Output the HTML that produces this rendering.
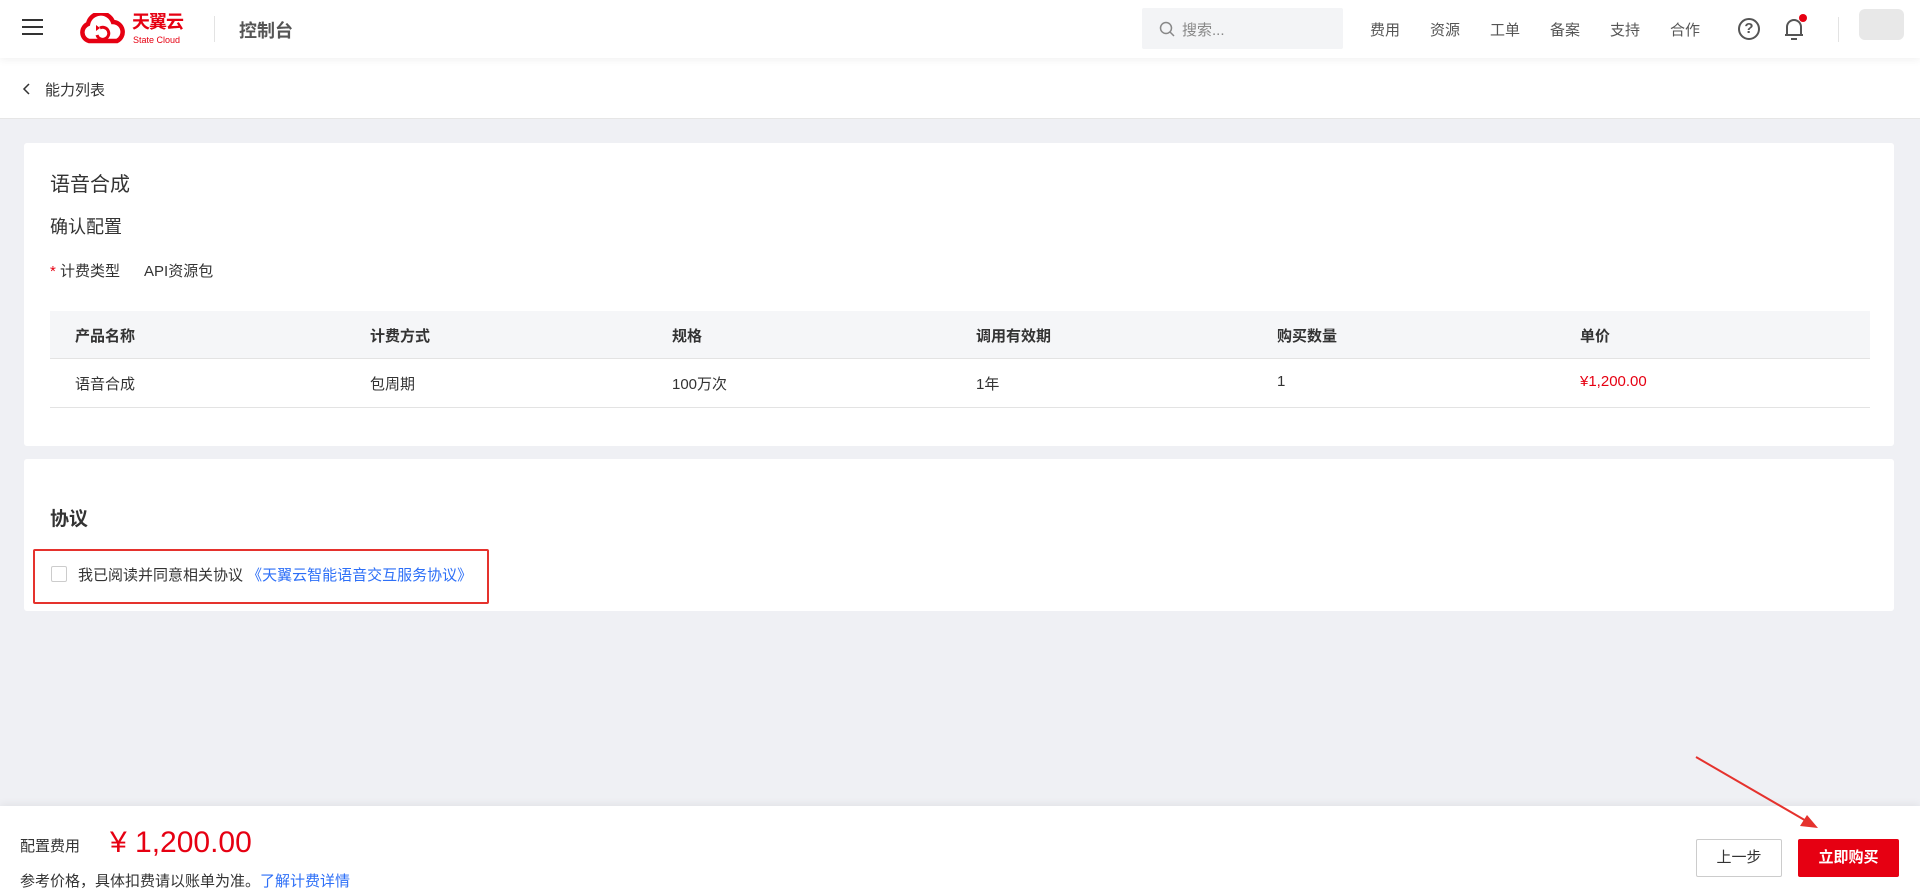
<!DOCTYPE html>
<html><head><meta charset="utf-8"><style>
*{margin:0;padding:0;box-sizing:border-box}
body{width:1920px;height:894px;overflow:hidden;background:#eff0f4;font-family:"Liberation Sans","Noto Sans CJK SC",sans-serif;color:#333;position:relative}
.abs{position:absolute}
.hdr{left:0;top:0;width:1920px;height:58px;background:#fff;box-shadow:0 2px 8px rgba(0,0,0,.06);z-index:2}
.bc{left:0;top:58px;width:1920px;height:61px;background:#fff;border-bottom:1px solid #e6e6e6}
.card{background:#fff;border-radius:3px}
.nav{top:19px;font-size:15px;color:#555}
.th{top:325px;font-size:15px;color:#333;font-weight:bold}
.td{top:373px;font-size:15px;color:#333}
</style></head><body>
<div class="abs hdr">
  <div class="abs" style="left:22px;top:19px;width:21px;height:2px;background:#333;box-shadow:0 7px 0 #333,0 14px 0 #333"></div>
  <svg class="abs" style="left:77px;top:13px" width="50" height="32" viewBox="0 0 50 32"><path d="M12 28 A9 9 0 0 1 11 11 A13 13 0 0 1 36 9 A10 10 0 0 1 40 28 Z" fill="none" stroke="#e60012" stroke-width="4.5"/><path d="M20 22 a6 6 0 1 0 3-7" fill="none" stroke="#e60012" stroke-width="3"/><path d="M19 12 l4 3 -4 3z" fill="#e60012"/></svg>
  <div class="abs" style="left:132px;top:12px;font-size:18px;line-height:20px;font-weight:bold;color:#e60012;letter-spacing:-1px">天翼云</div>
  <div class="abs" style="left:133px;top:35px;font-size:9px;line-height:10px;color:#e60012">State Cloud</div>
  <div class="abs" style="left:214px;top:16px;width:1px;height:26px;background:#e3e3e3"></div>
  <div class="abs" style="left:239px;top:17px;font-size:18px;font-weight:bold;color:#555">控制台</div>
  <div class="abs" style="left:1142px;top:8px;width:201px;height:41px;background:#f3f4f6;border-radius:2px"></div>
  <svg class="abs" style="left:1159px;top:21px" width="16" height="16"><circle cx="7" cy="7" r="5.5" fill="none" stroke="#888" stroke-width="1.5"/><path d="M11 11l4 4" stroke="#888" stroke-width="1.5"/></svg>
  <div class="abs" style="left:1182px;top:19px;font-size:15px;color:#888">搜索...</div>
  <div class="abs nav" style="left:1370px">费用</div>
  <div class="abs nav" style="left:1430px">资源</div>
  <div class="abs nav" style="left:1490px">工单</div>
  <div class="abs nav" style="left:1550px">备案</div>
  <div class="abs nav" style="left:1610px">支持</div>
  <div class="abs nav" style="left:1670px">合作</div>
  <div class="abs" style="left:1738px;top:18px;width:22px;height:22px;border:2px solid #555;border-radius:50%;font-size:15px;font-weight:bold;color:#555;text-align:center;line-height:18px">?</div>
  <svg class="abs" style="left:1782px;top:16px" width="24" height="26"><path d="M5 19 V11 a7 7 0 0 1 14 0 V19 Z M3 19 H21 M9 23 H15" fill="none" stroke="#555" stroke-width="2"/></svg>
  <div class="abs" style="left:1799px;top:14px;width:8px;height:8px;background:#e60012;border-radius:50%"></div>
  <div class="abs" style="left:1838px;top:17px;width:1px;height:25px;background:#e3e3e3"></div>
  <div class="abs" style="left:1859px;top:9px;width:45px;height:31px;background:#e8e8e8;border-radius:6px"></div>
</div>
<div class="abs bc">
  <svg class="abs" style="left:22px;top:25px" width="10" height="12"><path d="M7 1 L2 6 L7 11" fill="none" stroke="#333" stroke-width="1.5"/></svg>
  <div class="abs" style="left:45px;top:21px;font-size:15px;color:#333">能力列表</div>
</div>
<div class="abs card" style="left:24px;top:143px;width:1870px;height:303px"></div>
<div class="abs" style="left:50px;top:168px;font-size:20px;color:#333">语音合成</div>
<div class="abs" style="left:50px;top:213px;font-size:18px;color:#333">确认配置</div>
<div class="abs" style="left:50px;top:260px;font-size:15px"><span style="color:#e60012">*</span> 计费类型<span style="margin-left:24px">API资源包</span></div>
<div class="abs" style="left:50px;top:311px;width:1820px;height:48px;background:#f5f6f8;border-bottom:1px solid #e3e3e3"></div>
<div class="abs" style="left:50px;top:407px;width:1820px;height:1px;background:#e3e3e3"></div>
<div class="abs th" style="left:75px">产品名称</div><div class="abs th" style="left:370px">计费方式</div><div class="abs th" style="left:672px">规格</div><div class="abs th" style="left:976px">调用有效期</div><div class="abs th" style="left:1277px">购买数量</div><div class="abs th" style="left:1580px">单价</div>
<div class="abs td" style="left:75px">语音合成</div><div class="abs td" style="left:370px">包周期</div><div class="abs td" style="left:672px">100万次</div><div class="abs td" style="left:976px">1年</div><div class="abs td" style="left:1277px">1</div><div class="abs td" style="left:1580px;color:#e60012">¥1,200.00</div>
<div class="abs card" style="left:24px;top:459px;width:1870px;height:152px"></div>
<div class="abs" style="left:50px;top:504px;font-size:19px;font-weight:bold;color:#333">协议</div>
<div class="abs" style="left:33px;top:549px;width:456px;height:55px;border:2px solid #e5322d;border-radius:2px"></div>
<div class="abs" style="left:51px;top:566px;width:16px;height:16px;border:1px solid #ccc;border-radius:2px;background:#fff"></div>
<div class="abs" style="left:78px;top:564px;font-size:15px;color:#333">我已阅读并同意相关协议 <span style="color:#2d6ff7">《天翼云智能语音交互服务协议》</span></div>
<div class="abs" style="left:0;top:806px;width:1920px;height:88px;background:#fff;box-shadow:0 -2px 8px rgba(0,0,0,.06)"></div>
<div class="abs" style="left:20px;top:835px;font-size:15px;color:#333">配置费用</div>
<div class="abs" style="left:110px;top:826px;font-size:30px;color:#e60012">¥ 1,200.00</div>
<div class="abs" style="left:20px;top:870px;font-size:15px;color:#333">参考价格，具体扣费请以账单为准。<span style="color:#2d6ff7">了解计费详情</span></div>
<div class="abs" style="left:1696px;top:839px;width:86px;height:38px;border:1px solid #ccc;border-radius:2px;background:#fff;font-size:15px;text-align:center;line-height:36px;color:#333">上一步</div>
<div class="abs" style="left:1798px;top:839px;width:101px;height:38px;background:#e60012;border-radius:2px;font-size:15px;text-align:center;line-height:38px;color:#fff;font-weight:bold">立即购买</div>
<svg class="abs" style="left:0;top:0" width="1920" height="894"><path d="M1696 757 L1808 822" stroke="#e5322d" stroke-width="2"/><path d="M1818 828 L1800 826 L1807 815 Z" fill="#e5322d"/></svg>
</body></html>
